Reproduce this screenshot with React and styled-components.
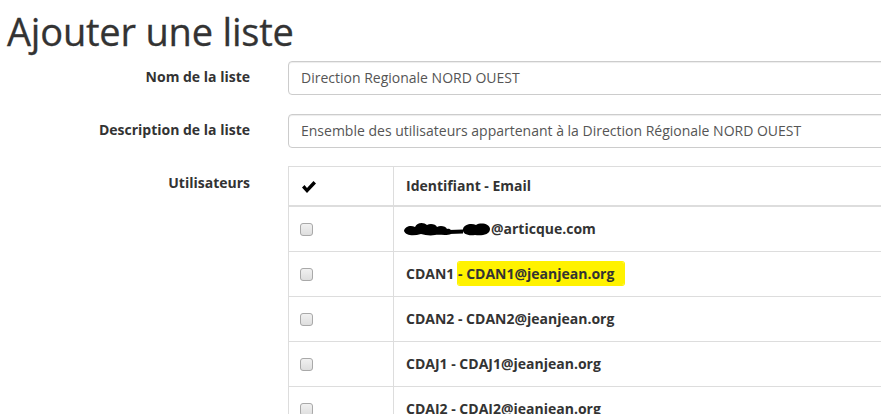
import React from 'react'
import styled, { createGlobalStyle } from 'styled-components'

const Global = createGlobalStyle`
	html, body {
		margin: 0;
		padding: 0;
		background: #fff;
		overflow: hidden;
	}
	body {
		font-family: 'Open Sans', 'Noto Sans', sans-serif;
		font-size: 14px;
		line-height: 20px;
		color: #333;
	}
`

const Page = styled.div`
	width: 881px;
	height: 414px;
	overflow: hidden;
	padding: 0 0 0 7px;
	box-sizing: border-box;
`

const Title = styled.h1`
	margin: 8px 0 0;
	font-size: 38px;
	font-weight: 500;
	line-height: 46px;
	letter-spacing: -0.2px;
	color: #333;
	-webkit-text-stroke: 0.3px #333;
`

const Form = styled.div`
	display: grid;
	grid-template-columns: 243px 900px;
	column-gap: 38px;
	row-gap: 19px;
	margin-top: 7px;
`

const Label = styled.label`
	text-align: right;
	font-weight: 700;
	font-size: 14px;
	padding-top: 6px;
	line-height: 20px;
`

const Input = styled.div`
	height: 34px;
	box-sizing: border-box;
	border: 1px solid #ccc;
	border-radius: 4px;
	box-shadow: inset 0 1px 1px rgba(0, 0, 0, 0.075);
	padding: 6px 12px;
	font-size: 14px;
	line-height: 20px;
	color: #555;
	white-space: nowrap;
`

const Table = styled.table`
	border-collapse: collapse;
	width: 900px;
	font-size: 14px;
	border: 1px solid #ddd;
	margin-top: -1px;
	th,
	td {
		border: 1px solid #ddd;
		text-align: left;
		vertical-align: middle;
		line-height: 20px;
	}
	th {
		padding: 9px 12px;
		font-weight: 700;
		border-bottom-width: 2px;
	}
	td {
		padding: 12px;
		font-weight: 700;
	}
`

const CheckCol = styled.th`
	width: 80px;
`

const Box = styled.span`
	display: inline-block;
	width: 11px;
	height: 11px;
	border: 1px solid #a9a9a9;
	border-radius: 3px;
	background: linear-gradient(#f1f1f1, #dedede);
	vertical-align: middle;
	margin: -2px 0 0 -1px;
`

const Mark = styled.span`
	background: #fff200;
	padding: 2px 10px 2px 0;
	border-radius: 2px;
	box-shadow: 0 0 0 1px #fff200;
`

const Blob = styled.svg`
	vertical-align: middle;
	margin: -3px 0 0 -3px;
`

const Check = () => (
	<svg width='16' height='14' viewBox='0 0 16 14' style={{ verticalAlign: 'middle' }}>
		<path d='M1 7.5 L3.5 5 L6 8 L12.5 1 L15 3.5 L6 13 Z' fill='#000' />
	</svg>
)

const Scribble = () => (
	<Blob width='88' height='16' viewBox='0 0 88 16'>
		<path
			d='M1 10 C2 5 8 4 12 6 C14 1 21 1 24 4 C27 2 33 3 34 6 C37 4 43 5 44 8 C47 7 50 10 48 13 C43 15 36 13 32 14 C27 15 22 14 18 13 C11 15 3 15 1 10 Z'
			fill='#000'
		/>
		<path d='M46 9 L60 8.5 L60 12.5 L46 13 Z' fill='#000' />
		<path
			d='M60 8 C61 3 69 2 73 4 C78 1 87 3 87 8 C87 14 78 15 72 14 C65 15 59 13 60 8 Z'
			fill='#000'
		/>
	</Blob>
)

const users = [
	{ id: 'redacted' },
	{ id: 'CDAN1', mark: true },
	{ id: 'CDAN2' },
	{ id: 'CDAJ1' },
	{ id: 'CDAJ2' },
]

const App = () => (
	<Page>
		<Global />
		<Title>Ajouter une liste</Title>
		<Form>
			<Label>Nom de la liste</Label>
			<Input>Direction Regionale NORD OUEST</Input>
			<Label>Description de la liste</Label>
			<Input>Ensemble des utilisateurs appartenant à la Direction Régionale NORD OUEST</Input>
			<Label>Utilisateurs</Label>
			<Table>
				<thead>
					<tr>
						<CheckCol>
							<Check />
						</CheckCol>
						<th>Identifiant - Email</th>
					</tr>
				</thead>
				<tbody>
					{users.map((u) => (
						<tr key={u.id}>
							<td>
								<Box />
							</td>
							<td>
								{u.id === 'redacted' ? (
									<>
										<Scribble />
										@articque.com
									</>
								) : u.mark ? (
									<>
										{u.id} <Mark>- {u.id}@jeanjean.org</Mark>
									</>
								) : (
									`${u.id} - ${u.id}@jeanjean.org`
								)}
							</td>
						</tr>
					))}
				</tbody>
			</Table>
		</Form>
	</Page>
)

export default App
